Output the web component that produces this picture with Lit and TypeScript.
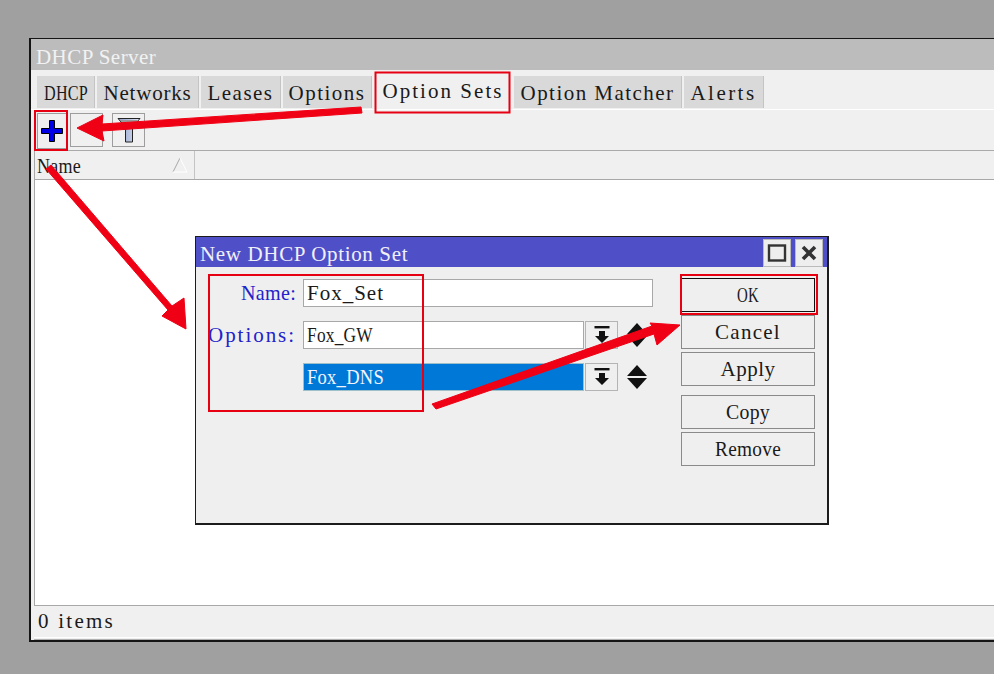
import { LitElement, html, css, svg } from "lit";
import { customElement } from "lit/decorators.js";
import { styleMap } from "lit/directives/style-map.js";

const TABS = [
  { label: "DHCP", w: 58 },
  { label: "Networks", w: 102 },
  { label: "Leases", w: 80 },
  { label: "Options", w: 89 },
  { label: "Option Sets", w: 138, sel: true },
  { label: "Option Matcher", w: 168 },
  { label: "Alerts", w: 80 },
];

const PITCH = 11;
const MIN_SPACING = 0.3;
const ctx = document.createElement("canvas").getContext("2d")!;
ctx.font = '21px "Liberation Serif"';

/**
 * The reference face is fixed-pitch. Spread each string to 11px per glyph; strings heavy
 * in capitals cannot reach that by spacing alone, so they are narrowed horizontally.
 */
function t(s: string) {
  const target = PITCH * s.length;
  const natural = ctx.measureText(s).width;
  const spacing = Math.max(MIN_SPACING, (target - natural) / s.length);
  const scale = Math.min(1, target / (natural + spacing * s.length));
  return html`<span
    class="txt"
    style=${styleMap({
      width: `${target}px`,
      letterSpacing: `${spacing.toFixed(2)}px`,
      transform: scale < 1 ? `scaleX(${scale.toFixed(3)})` : "none",
    })}
    >${s}</span
  >`;
}

@customElement("app-root")
export class AppRoot extends LitElement {
  static styles = css`
    :host { display: block; }
    * { box-sizing: border-box; }
    .txt { display: inline-block; white-space: pre; transform-origin: left center; flex: none; }
    .page {
      position: relative; width: 994px; height: 674px; overflow: hidden;
      background: #a0a0a0; padding: 38px 0 0 29px;
      font-family: "Liberation Serif", serif; font-size: 21px; color: #1a1a1a;
    }
    .win {
      width: 1000px; height: 604px; display: flex; flex-direction: column;
      background: #f0f0f0; border: 2px solid #151515; border-top-width: 1px;
    }
    .wtitle { height: 31px; background: #bcbcbc; color: #f2f2f2; padding: 5px 0 0 5px; display: flex; align-items: center; }
    .tabs { height: 40px; display: flex; align-items: flex-end; padding: 0 0 1px 6px; gap: 2px; border-bottom: 1px solid #fff; }
    .tab { height: 32px; padding-top: 3px; background: #d9d9d9; display: flex; align-items: center; justify-content: center; border-right: 1px solid #c4c4c4; }
    .tab.sel { background: #f0f0f0; height: 36px; align-items: flex-start; padding-top: 6px; margin-bottom: -1px; border: 0; }
    .tools { height: 41px; display: flex; gap: 9px; padding: 3px 0 0 3px; border-bottom: 1px solid #aaa; margin-left: 3px; }
    .tool { width: 33px; height: 34px; border: 1px solid #9d9d9d; display: flex; align-items: center; justify-content: center; background: #f0f0f0; }
    .tool.first { margin-right: -6px; width: 30px; height: 36px; }
    .table { flex: 1; margin-left: 3px; display: flex; flex-direction: column; border-left: 1px solid #a8a8a8; }
    .thead { height: 29px; display: flex; border-bottom: 1px solid #a8a8a8; }
    .col { width: 160px; border-right: 1px solid #c4c4c4; position: relative; padding: 2px 0 0 2px; display: flex; align-items: center; background: #f0f0f0; }
    .col svg { position: absolute; right: 6px; top: 6px; }
    .tbody { flex: 1; background: #fff; }
    .status { height: 32px; margin-left: 3px; border-top: 1px solid #a8a8a8; padding-left: 4px; display: flex; align-items: center; }
    .wfoot { height: 3px; margin-left: 3px; border-top: 1px solid #fff; border-bottom: 1px solid #b0b0b0; }

    .dlg {
      position: absolute; left: 195px; top: 236px; width: 634px; height: 289px;
      background: #efefef; border: 1px solid #1c1c1c; border-right-width: 2px; border-bottom-width: 2px;
      display: flex; flex-direction: column;
    }
    .dtitle { height: 30px; background: #4f4fc8; color: #f0f0f8; display: flex; align-items: flex-start; justify-content: space-between; padding: 0 4px 0 4px; }
    .dname { padding-top: 5px; }
    .dbtns { display: flex; gap: 4px; margin-top: 2px; }
    .dbtn { width: 28px; height: 28px; background: #eee; border: 1px solid #bbb; display: flex; align-items: center; justify-content: center; }
    .dbody { flex: 1; display: flex; justify-content: space-between; padding: 11px 12px 0 0; }
    .form { display: flex; flex-direction: column; gap: 14px; padding-top: 1px; }
    .row { display: flex; align-items: center; height: 28px; }
    .lbl { width: 107px; text-align: right; color: #2222cc; padding: 1px 7px 0 0; white-space: nowrap; }
    .inp { height: 28px; background: #fff; border: 1px solid #a8a8a8; padding: 1px 0 0 3px; display: flex; align-items: center; width: 350px; }
    .inp.short { width: 281px; }
    .inp.pick { background: #0078d7; color: #f4f4ff; border-color: #9fc0c8; }
    .drop { width: 33px; height: 28px; margin-left: 1px; border: 1px solid #b4b4b4; display: flex; align-items: center; justify-content: center; }
    .updn { margin-left: 9px; display: block; }
    .side { width: 134px; display: flex; flex-direction: column; gap: 3px; }
    .btn { height: 34px; padding-top: 1px; border: 1px solid #8a8a8a; display: flex; align-items: center; justify-content: center; background: #efefef; }
    .btn.def { border: 1px solid #111; }
    .btn.gap { margin-top: 6px; }
    .over { position: absolute; left: 0; top: 0; pointer-events: none; }
  `;

  private dropIcon() {
    return html`<svg width="18" height="20" viewBox="0 0 18 20"><rect x="1.5" y="1" width="15" height="2.4" fill="#111"/><path d="M6 6h6v5h4l-7 7-7-7h4z" fill="#111"/></svg>`;
  }
  private updnIcon() {
    return html`<svg class="updn" width="20" height="24" viewBox="0 0 20 24"><path d="M10 0 20 11H0z" fill="#111"/><path d="M0 13h20L10 24z" fill="#111"/></svg>`;
  }

  render() {
    return html`<div class="page">
      <div class="win">
        <div class="wtitle">${t("DHCP Server")}</div>
        <div class="tabs">
          ${TABS.map((x) => html`<div class="tab ${x.sel ? "sel" : ""}" style="width:${x.w}px">${t(x.label)}</div>`)}
        </div>
        <div class="tools">
          <div class="tool first">
            <svg width="24" height="24" viewBox="0 0 24 24"><path d="M9.5 1.5h5v8h8v5h-8v8h-5v-8h-8v-5h8z" fill="#0000e6" stroke="#000" stroke-width="1"/></svg>
          </div>
          <div class="tool"></div>
          <div class="tool">
            <svg width="24" height="26" viewBox="0 0 24 26">
              <defs><linearGradient id="fg" x1="0" y1="0" x2="1" y2="0"><stop offset="0" stop-color="#8f9fc8"/><stop offset="1" stop-color="#dfe6f6"/></linearGradient></defs>
              <path d="M1 1.5h22L15.5 10v15h-7V10z" fill="url(#fg)" stroke="#222" stroke-width="1"/>
              <path d="M3 3h18l-5 5H8z" fill="#9a9a9a"/>
            </svg>
          </div>
        </div>
        <div class="table">
          <div class="thead">
            <div class="col">${t("Name")}
              <svg width="16" height="16" viewBox="0 0 16 16"><path d="M1 15 8 1" stroke="#a8a8a8" fill="none"/><path d="M8 1l7 14H1" stroke="#fff" fill="none"/></svg>
            </div>
          </div>
          <div class="tbody"></div>
        </div>
        <div class="status">${t("0 items")}</div>
        <div class="wfoot"></div>
      </div>

      <div class="dlg">
        <div class="dtitle">
          <div class="dname">${t("New DHCP Option Set")}</div>
          <div class="dbtns">
            <div class="dbtn"><svg width="20" height="18" viewBox="0 0 20 18"><rect x="2" y="1.5" width="16" height="15" fill="none" stroke="#333" stroke-width="2.4"/></svg></div>
            <div class="dbtn"><svg width="18" height="18" viewBox="0 0 18 18"><path d="M3 3 15 15M15 3 3 15" stroke="#333" stroke-width="3.6" fill="none"/></svg></div>
          </div>
        </div>
        <div class="dbody">
          <div class="form">
            <div class="row"><div class="lbl">${t("Name:")}</div><div class="inp">${t("Fox_Set")}</div></div>
            <div class="row"><div class="lbl">${t("Options:")}</div><div class="inp short">${t("Fox_GW")}</div><div class="drop">${this.dropIcon()}</div>${this.updnIcon()}</div>
            <div class="row"><div class="lbl"></div><div class="inp short pick">${t("Fox_DNS")}</div><div class="drop">${this.dropIcon()}</div>${this.updnIcon()}</div>
          </div>
          <div class="side">
            <div class="btn def">${t("OK")}</div>
            <div class="btn">${t("Cancel")}</div>
            <div class="btn">${t("Apply")}</div>
            <div class="btn gap">${t("Copy")}</div>
            <div class="btn">${t("Remove")}</div>
          </div>
        </div>
      </div>

      <svg class="over" width="994" height="674" viewBox="0 0 994 674">
        ${svg`<g fill="none" stroke="#e60012" stroke-width="2">
          <rect x="375.5" y="72.5" width="134" height="40"/>
          <rect x="35" y="111" width="32" height="39"/>
          <rect x="209" y="275" width="214" height="136"/>
          <rect x="681" y="275" width="136" height="39"/>
        </g>
        <g fill="#f00014" stroke="#f00014" stroke-linejoin="round" stroke-width="1">
          <path d="M361 107 362 113 102 131 104 141 77 128 103 115 102 124Z"/>
          <path d="M46 169 51 165 172 306 184 298 186 329 162 316 168 310Z"/>
          <path d="M432 404 436 409 654 334 657 345 680 325 650 323 652 326Z"/>
        </g>`}
      </svg>
    </div>`;
  }
}
